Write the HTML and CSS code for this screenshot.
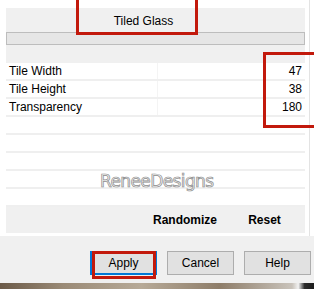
FILE: index.html
```html
<!DOCTYPE html>
<html>
<head>
<meta charset="utf-8">
<link rel="stylesheet" href="styles.css">
</head>
<body>
<div class="screen">
  <div class="main">
    <div class="content">
      <div class="header">
        <div class="title">Tiled Glass</div>
        <div class="bar"></div>
      </div>
      <div class="rows">
        <div class="row"><span class="label">Tile Width</span><span class="value">47</span></div>
        <div class="row"><span class="label">Tile Height</span><span class="value">38</span></div>
        <div class="row"><span class="label">Transparency</span><span class="value">180</span></div>
        <div class="row"></div>
        <div class="row"></div>
        <div class="row"></div>
        <div class="row"></div>
        <div class="row"></div>
      </div>
      <div class="actions">
        <span class="action action-random">Randomize</span>
        <span class="action action-reset">Reset</span>
      </div>
    </div>
    <div class="side"><div class="side-line"></div></div>
  </div>
  <div class="buttons">
    <button class="btn btn-default">Apply</button>
    <button class="btn">Cancel</button>
    <button class="btn">Help</button>
  </div>
  <div class="desktop"></div>

  <div class="watermark">ReneeDesigns</div>
  <div class="mark mark-title"></div>
  <div class="mark mark-values"></div>
  <div class="mark mark-apply"></div>
</div>
</body>
</html>
```

FILE: styles.css
```css
html, body {
  margin: 0;
  padding: 0;
}
body {
  width: 314px;
  height: 289px;
  overflow: hidden;
  background: #ffffff;
  font-family: "Liberation Sans", Arial, sans-serif;
  font-size: 12px;
  color: #000;
}
.screen {
  position: relative;
  width: 314px;
  height: 289px;
  display: flex;
  flex-direction: column;
}
.main {
  display: flex;
  height: 236px;
  background: #fff;
}
.content {
  margin-left: 6px;
  width: 299px;
  padding-top: 8px;
  display: flex;
  flex-direction: column;
}
.header {
  background: #f0f0f0;
  height: 55px;
  display: flex;
  flex-direction: column;
}
.title {
  height: 24px;
  line-height: 24px;
  padding-top: 1px;
  box-sizing: border-box;
  text-align: center;
  margin-left: -24px;
}
.bar {
  height: 11px;
  border: 1px solid #bdbdbd;
  background: #e6e6e6;
}
.rows {
  display: flex;
  flex-direction: column;
}
.row {
  height: 16px;
  border-bottom: 2px solid #efefef;
  background: #fff;
  display: flex;
  justify-content: space-between;
  align-items: center;
  padding: 0 3px 0 3px;
  background-image: linear-gradient(#f4f4f4, #f4f4f4);
  background-size: 1px 100%;
  background-position: 151px 0;
  background-repeat: no-repeat;
}
.row:nth-child(n+4) {
  background-image: none;
}
.label,
.value {
  line-height: 16px;
}
.actions {
  background: #f0f0f0;
  height: 26px;
  display: flex;
  justify-content: flex-end;
  align-items: center;
  font-weight: bold;
}
.action {
  text-align: center;
}
.action-random {
  width: 78px;
}
.action-reset {
  width: 81px;
}
.side {
  flex: 1;
  display: flex;
  padding-left: 4px;
}
.side-line {
  width: 1px;
  background: #e3e3e3;
}
.buttons {
  background: #f0f0f0;
  height: 47px;
  display: flex;
  justify-content: flex-end;
  align-items: flex-start;
  gap: 10px;
  padding: 15px 3px 0 0;
  box-sizing: border-box;
}
.btn {
  width: 67px;
  height: 24px;
  background: #e1e1e1;
  border: 1px solid #adadad;
  font-family: "Liberation Sans", Arial, sans-serif;
  font-size: 12px;
  color: #000;
  padding: 0;
  margin: 0;
}
.btn-default {
  border-color: #0078d7;
  box-shadow: inset 0 0 0 1px #0078d7;
}
.desktop {
  flex: 1;
  background: linear-gradient(90deg, #6b5a48 0%, #9a8a76 20%, #b7aa98 45%, #8e7d69 70%, #c9c3bb 93%, #f2f2f2 95%, #2a2a2a 97%, #1c1c1c 100%);
}
.watermark {
  position: absolute;
  left: 100px;
  top: 171px;
  font-family: "DejaVu Sans", sans-serif;
  font-size: 17px;
  letter-spacing: -0.6px;
  color: #f3f3f3;
  -webkit-text-stroke: 0.7px #8c8c8c;
}
.mark {
  position: absolute;
  border: 3px solid #c2190c;
  box-sizing: border-box;
}
.mark-title {
  left: 76px;
  top: -4px;
  width: 122px;
  height: 39px;
}
.mark-values {
  left: 263px;
  top: 52px;
  width: 60px;
  height: 76px;
}
.mark-apply {
  left: 92px;
  top: 251px;
  width: 64px;
  height: 28px;
}
```
